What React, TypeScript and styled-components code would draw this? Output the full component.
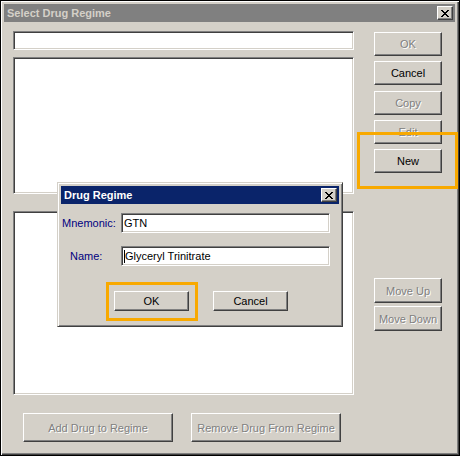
import React from "react";
import styled, { createGlobalStyle } from "styled-components";

const Global = createGlobalStyle`
  html, body { margin: 0; padding: 0; background: #ffffff; }
  body { font-family: "Liberation Sans", Arial, sans-serif; font-size: 11px; }
  * { box-sizing: border-box; }
`;

const Window = styled.div`
  position: relative;
  width: 460px;
  height: 456px;
  background: #d4d0c8;
  border: 1px solid #000000;
  box-shadow: inset 1px 1px #ffffff, inset -1px -1px #404040, inset -2px -2px #808080;
  padding: 3px 4px 4px 3px;
  display: flex;
  flex-direction: column;
`;

const TitleBar = styled.div<{ $active?: boolean }>`
  height: 18px;
  flex: none;
  display: flex;
  align-items: center;
  justify-content: space-between;
  padding: 0 2px 0 3px;
  background: ${(p) => (p.$active ? "#0a246a" : "#808080")};
`;

const TitleText = styled.span<{ $active?: boolean }>`
  font-family: "Liberation Sans", Arial, sans-serif;
  font-weight: bold;
  font-size: 11px;
  color: ${(p) => (p.$active ? "#ffffff" : "#d4d0c8")};
`;

const CloseBox = styled.div`
  width: 16px;
  height: 14px;
  background: #d4d0c8;
  border: 1px solid;
  border-color: #ffffff #404040 #404040 #ffffff;
  box-shadow: inset -1px -1px #808080;
  display: flex;
  align-items: center;
  justify-content: center;
`;

const CloseButton = () => (
  <CloseBox>
    <svg width="8" height="7" viewBox="0 0 8 7" shapeRendering="crispEdges">
      <path
        d="M0 0h2v1h-2zM6 0h2v1h-2zM1 1h2v1h-2zM5 1h2v1h-2zM2 2h4v1h-4zM3 3h2v1h-2zM2 4h4v1h-4zM1 5h2v1h-2zM5 5h2v1h-2zM0 6h2v1h-2zM6 6h2v1h-2z"
        fill="#000"
      />
    </svg>
  </CloseBox>
);

const Body = styled.div`
  flex: 1;
  display: grid;
  grid-template-columns: 341px 68px;
  column-gap: 20px;
  padding: 9px 0 0 9px;
`;

const LeftColumn = styled.div`
  display: flex;
  flex-direction: column;
`;

const Sunken = styled.div<{ $height: number; $gap?: number }>`
  height: ${(p) => p.$height}px;
  margin-top: ${(p) => p.$gap ?? 0}px;
  background: #ffffff;
  border: 1px solid;
  border-color: #808080 #ffffff #ffffff #808080;
  box-shadow: inset 1px 1px #404040, inset -1px -1px #d4d0c8;
  display: flex;
  align-items: center;
  padding: 0 2px;
  font-family: "Liberation Sans", Arial, sans-serif;
  font-size: 11px;
  color: #000;
`;

const BottomRow = styled.div`
  display: flex;
  gap: 18px;
  margin-top: 18px;
  padding-left: 10px;
`;

const Button = styled.button<{ $w: number; $h: number; $gap?: number }>`
  width: ${(p) => p.$w}px;
  height: ${(p) => p.$h}px;
  margin: ${(p) => p.$gap ?? 0}px 0 0 0;
  padding: 0;
  background: #d4d0c8;
  border: 1px solid;
  border-color: #ffffff #404040 #404040 #ffffff;
  box-shadow: inset -1px -1px #808080;
  font-family: "Liberation Sans", Arial, sans-serif;
  font-size: 11px;
  color: #000000;
  &:disabled {
    color: #808080;
    text-shadow: 1px 1px #ffffff;
  }
`;

const RightColumn = styled.div`
  display: flex;
  flex-direction: column;
  padding-top: 1px;
`;

const Highlight = styled.div<{ $l: number; $t: number; $w: number; $h: number }>`
  position: absolute;
  left: ${(p) => p.$l}px;
  top: ${(p) => p.$t}px;
  width: ${(p) => p.$w}px;
  height: ${(p) => p.$h}px;
  border: 3px solid #f8a900;
  pointer-events: none;
`;

const Dialog = styled.div`
  position: absolute;
  left: 56px;
  top: 181px;
  width: 286px;
  height: 145px;
  background: #d4d0c8;
  border: 1px solid;
  border-color: #d4d0c8 #404040 #404040 #d4d0c8;
  box-shadow: inset 1px 1px #ffffff, inset -1px -1px #808080;
  padding: 3px;
  display: flex;
  flex-direction: column;
`;

const DialogBody = styled.div`
  display: grid;
  grid-template-columns: 60px 209px;
  row-gap: 13px;
  padding-top: 9px;
  align-items: center;
`;

const FieldLabel = styled.span<{ $indent: number }>`
  padding-left: ${(p) => p.$indent}px;
  font-family: "Liberation Sans", Arial, sans-serif;
  font-size: 11px;
  color: #000080;
`;

const Caret = styled.span`
  display: inline-block;
  width: 1px;
  height: 13px;
  background: #000;
`;

const DialogButtons = styled.div`
  display: flex;
  gap: 24px;
  padding: 25px 0 0 53px;
`;

export default function App() {
  return (
    <>
      <Global />
      <Window>
        <TitleBar>
          <TitleText>Select Drug Regime</TitleText>
          <CloseButton />
        </TitleBar>
        <Body>
          <LeftColumn>
            <Sunken $height={19} />
            <Sunken $height={137} $gap={7} />
            <Sunken $height={184} $gap={17} />
            <BottomRow>
              <Button $w={150} $h={29} disabled>
                Add Drug to Regime
              </Button>
              <Button $w={150} $h={29} disabled>
                Remove Drug From Regime
              </Button>
            </BottomRow>
          </LeftColumn>
          <RightColumn>
            <Button $w={68} $h={24} disabled>
              OK
            </Button>
            <Button $w={68} $h={24} $gap={5}>
              Cancel
            </Button>
            <Button $w={68} $h={24} $gap={6} disabled>
              Copy
            </Button>
            <Button $w={68} $h={24} $gap={5} disabled>
              Edit
            </Button>
            <Button $w={68} $h={24} $gap={5}>
              New
            </Button>
            <Button $w={68} $h={25} $gap={105} disabled>
              Move Up
            </Button>
            <Button $w={68} $h={25} $gap={3} disabled>
              Move Down
            </Button>
          </RightColumn>
        </Body>
        <Highlight $l={356} $t={131} $w={101} $h={57} />
        <Dialog>
          <TitleBar $active>
            <TitleText $active>Drug Regime</TitleText>
            <CloseButton />
          </TitleBar>
          <DialogBody>
            <FieldLabel $indent={1}>Mnemonic:</FieldLabel>
            <Sunken $height={20}>GTN</Sunken>
            <FieldLabel $indent={9}>Name:</FieldLabel>
            <Sunken $height={20}>
              <Caret />
              Glyceryl Trinitrate
            </Sunken>
          </DialogBody>
          <DialogButtons>
            <Button $w={75} $h={20}>OK</Button>
            <Button $w={75} $h={20}>Cancel</Button>
          </DialogButtons>
          <Highlight $l={48} $t={99} $w={92} $h={39} />
        </Dialog>
      </Window>
    </>
  );
}
